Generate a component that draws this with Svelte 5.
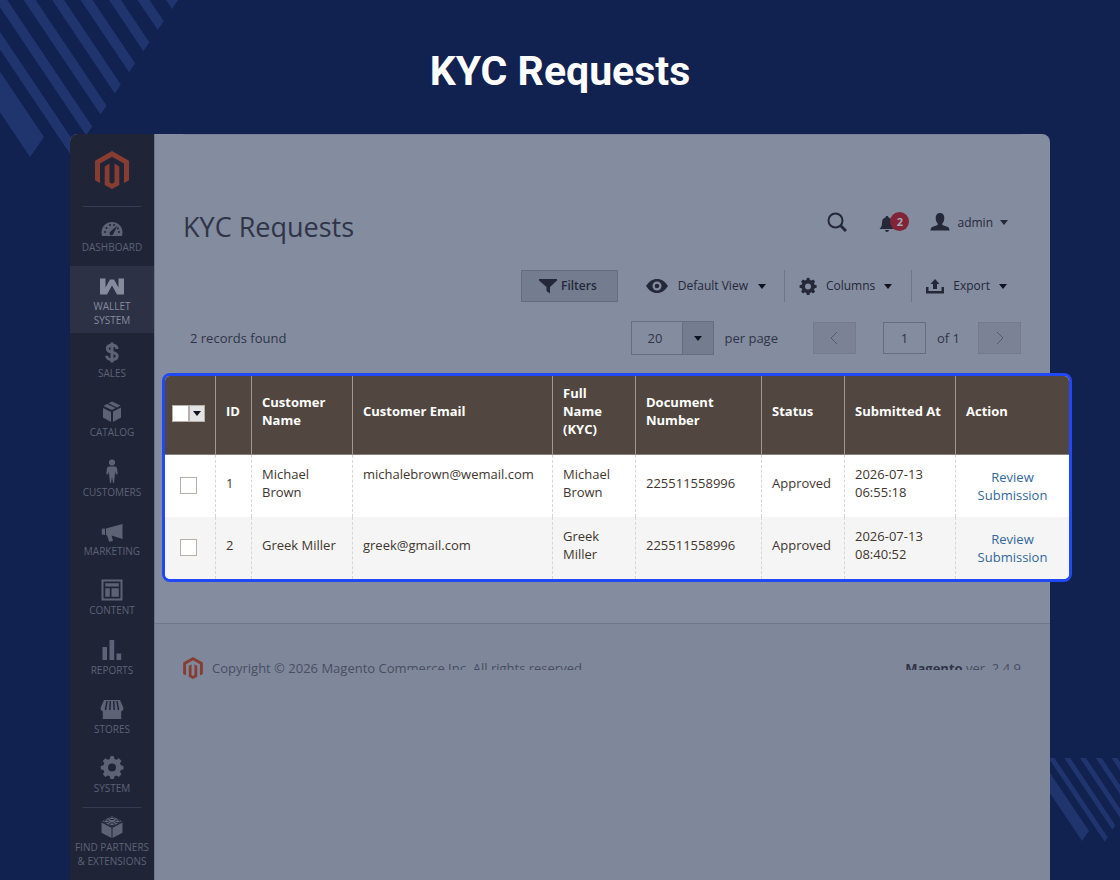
<script lang="ts">
  type Column = { label: string; width: number }

  const columns: Column[] = [
    { label: 'ID', width: 36 },
    { label: 'Customer Name', width: 101 },
    { label: 'Customer Email', width: 200 },
    { label: 'Full Name (KYC)', width: 83 },
    { label: 'Document Number', width: 126 },
    { label: 'Status', width: 83 },
    { label: 'Submitted At', width: 111 },
    { label: 'Action', width: 113 },
  ]

  let rows = $state([
    { id: 1, name: 'Michael Brown', email: 'michalebrown@wemail.com', doc: '225511558996', status: 'Approved', at: '2026-07-13 06:55:18', picked: false },
    { id: 2, name: 'Greek Miller', email: 'greek@gmail.com', doc: '225511558996', status: 'Approved', at: '2026-07-13 08:40:52', picked: false },
  ])

  const menu = [
    { icon: 'dashboard', label: 'Dashboard' },
    { icon: 'wallet', label: 'Wallet System', active: true },
    { icon: 'sales', label: 'Sales' },
    { icon: 'catalog', label: 'Catalog' },
    { icon: 'customers', label: 'Customers' },
    { icon: 'marketing', label: 'Marketing' },
    { icon: 'content', label: 'Content' },
    { icon: 'reports', label: 'Reports' },
    { icon: 'stores', label: 'Stores' },
    { icon: 'system', label: 'System' },
    { icon: 'partners', label: 'Find Partners & Extensions', divided: true },
  ]

  let pageSize = $state(20)
  let page = $state(1)

  function pickAll(e: Event) {
    const on = (e.currentTarget as HTMLInputElement).checked
    rows.forEach((r) => (r.picked = on))
  }

  // A diagonal bar: (x, y) is its right tip, (w, h) the step to its bottom tip.
  function bar(x: number, y: number, w: number, h: number) {
    return `${x},${y} ${x - w},${y + h} ${x - w - 200},${y + h - 298} ${x - 200},${y - 298}`
  }
</script>

{#snippet gear()}
  <path d="M12 1l1.900.3.6 2.700 2 .8 2.400-1.500 2.600 2.600-1.500 2.400.8 2 2.700.6v3.400l-2.700.6-.8 2 1.500 2.400-2.600 2.600-2.400-1.500-2 .8-.6 2.700h-3.500l-.6-2.700-2-.8-2.400 1.500-2.600-2.600 1.500-2.400-.8-2-2.700-.6v-3.400l2.700-.6.8-2-1.500-2.400 2.600-2.600 2.400 1.500 2-.8.6-2.700zM12 8.500a4 4 0 1 0 0 8 4 4 0 0 0 0-8z" fill-rule="evenodd" />
{/snippet}

{#snippet caret()}
  <svg class="caret" viewBox="0 0 8 5" aria-hidden="true"><path d="M0 0h8L4 5z" /></svg>
{/snippet}

{#snippet magento()}
  <svg class="magento" viewBox="0 0 34 38" aria-hidden="true">
    <path d="M17 0l17 9.700v19.500l-5 2.900V12.600L17 5.700 5 12.600v19.500l-5-2.900V9.700z" />
    <path d="M9.700 15.400l4.800-2.800v18.600l2.500 1.500 2.500-1.500V12.600l4.800 2.800V34L17 38l-7.300-4z" />
  </svg>
{/snippet}

<div class="page">
  <svg class="stripes top" viewBox="0 0 180 160" aria-hidden="true">
    {#each [0, 1, 2, 3, 4, 5, 6, 7] as i}
      <polygon points={bar(178 - 14.3 * i, 21.1 * i, 6, 9)} />
    {/each}
    <polygon points={bar(44, 137, 14, 20)} />
  </svg>
  <svg class="stripes bottom" viewBox="0 0 70 84" aria-hidden="true">
    {#each [0, 1, 2, 3, 4] as i}
      <polygon points={bar(57.7 + 7.7 * i, 79.300 - 12 * i, 3, 4.500)} />
    {/each}
    <polygon points={bar(39, 73, 7, 10)} />
  </svg>

  <h1>KYC Requests</h1>

  <div class="panel">
    <nav>
      <a class="brand" href="#home" aria-label="Home">{@render magento()}</a>
      {#each menu as item}
        {#if item.divided}<hr />{/if}
        <a class="item" class:active={item.active} href="#{item.icon}">
          <svg viewBox="0 0 24 24" aria-hidden="true">
            {#if item.icon === 'dashboard'}
              <path d="M12 8C6 8 1.500 12.500 1.500 18.500c0 1.500.2 2.500.6 3.500h19.800c.4-1 .6-2 .6-3.500C22.500 12.500 18 8 12 8z" />
              <g class="ink">
                <path d="M17.500 11.500l-4 8a2 2 0 1 1-3-2z" />
                <circle cx="5" cy="18" r="1" /><circle cx="6.500" cy="14" r="1" /><circle cx="10" cy="11" r="1" />
                <circle cx="14" cy="11" r="1" /><circle cx="19" cy="18" r="1" /><circle cx="18" cy="14.500" r="1" />
              </g>
            {:else if item.icon === 'wallet'}
              <path d="M0 5.500h5.500v9l4.500-8h4l4.500 8v-9H24v16h-7l-5-9-5 9H0z" />
            {:else if item.icon === 'sales'}
              <path class="line" d="M17 9c0-2.500-2-3.700-5-3.700S7.300 6.600 7.300 8.700c0 5 9.900 2.300 9.900 7.100 0 2.500-2.200 3.900-5.200 3.900s-5.300-1.500-5.300-4M12 2.500v20" />
            {:else if item.icon === 'catalog'}
              <path d="M13 12.500l8-4v10l-8 4.500zM3 9l8 4v10l-8-4.500zM3.500 7l3.500-2 8.500 4-3.500 2zM8.500 4.200L12 2.500 20.500 6.500l-3.500 2z" />
            {:else if item.icon === 'customers'}
              <circle cx="12" cy="3.500" r="3.100" />
              <path d="M9 7.500h6c1.500 0 2 1 2.200 2.500l.5 5-1.700.5-.8-3-1.200 11.500h-1l-1-6-1 6h-1L8.800 12.500l-.8 3-1.700-.5.5-5C7 8.500 7.500 7.500 9 7.500z" />
            {:else if item.icon === 'marketing'}
              <path d="M22.500 6v15l-11-3.500 1.500 5.500-3.800.8L7 17.300 6 17v-6.500zM1.800 10.800L5 10.500v6.500l-3.200-.5z" />
            {:else if item.icon === 'content'}
              <path d="M1.500 2.500h21v21h-21zM3.500 4.500v17h17v-17zM5.300 6.300h13.500v3.300H5.300zM5.300 11.300h4.500v8.500H5.300zM11.500 11.300h7.300v8.500h-7.300z" fill-rule="evenodd" />
            {:else if item.icon === 'reports'}
              <path d="M2.500 10h4.500v13H2.500zM9.500 3h4.700v20H9.500zM16.500 16.500h4.700V23h-4.700z" />
            {:else if item.icon === 'stores'}
              <path d="M4 4h16l3.500 8c0 2-1 3-2.300 3.200V23H2.800v-7.800C1.500 15 .5 14 .5 12z" />
              <path class="ink gap" d="M7 5l-1.500 9M10.300 5l-.5 9M13.700 5l.5 9M17 5l1.500 9" />
            {:else if item.icon === 'system'}
              {@render gear()}
            {:else}
              <path d="M1.500 8.500l10 5.200V24l-10-5.200zM22.500 8.500l-10 5.200V24l10-5.200zM12 2l10 5.300-10 5.200L2 7.300z" />
              <g class="ink ring">
                <ellipse cx="12" cy="4.300" rx="2.500" ry="1.300" /><ellipse cx="6.500" cy="7.300" rx="2.500" ry="1.300" />
                <ellipse cx="17.500" cy="7.300" rx="2.500" ry="1.300" /><ellipse cx="12" cy="10.200" rx="2.500" ry="1.300" />
              </g>
            {/if}
          </svg>
          <span>{item.label}</span>
        </a>
      {/each}
    </nav>

    <main>
      <header>
        <h2>KYC Requests</h2>
        <div class="account">
          <button aria-label="Search">
            <svg class="i20" viewBox="0 0 20 20" aria-hidden="true">
              <circle class="line" cx="8.500" cy="8.500" r="7" /><path class="line thick" d="M13.500 13.500l5.500 5.500" />
            </svg>
          </button>
          <button class="bell" aria-label="Notifications">
            <svg class="i16" viewBox="0 0 16 16" aria-hidden="true">
              <path d="M8 0c1 0 1.500.6 1.500 1.500C12 2.200 13 4 13 6.500c0 3.500.8 5 2.500 6.500H.5C2.200 11.500 3 10 3 6.500 3 4 4 2.200 6.500 1.500 6.500.6 7 0 8 0zM6 14h4c-.2 1.300-1 2-2 2s-1.800-.7-2-2z" />
            </svg>
            <span class="badge">2</span>
          </button>
          <button>
            <svg class="i20" viewBox="0 0 20 20" aria-hidden="true">
              <path d="M10 1c3 0 4.300 2 4.300 5 0 2.500-.8 4.500-2 5.500v1.600l5.500 2c1.200.5 1.500 1.500 1.700 3.400H.5c.2-1.900.5-2.900 1.700-3.400l5.500-2v-1.600c-1.200-1-2-3-2-5.500 0-3 1.300-5 4.300-5z" />
            </svg>
            admin {@render caret()}
          </button>
        </div>
      </header>

      <div class="tools">
        <button class="filters">
          <svg class="i18" viewBox="0 0 18 18" aria-hidden="true"><path d="M0 2h18v1.500L11 10v6.500L7.500 14v-4L0 3.500z" /></svg>
          Filters
        </button>
        <button class="view">
          <svg class="eye" viewBox="0 0 22 14" aria-hidden="true">
            <path d="M0 7c3-4.500 6.500-7 11-7s8 2.500 11 7c-3 4.500-6.500 7-11 7S3 11.500 0 7zM11 2.500a4.500 4.500 0 1 0 0 9 4.500 4.500 0 0 0 0-9z" fill-rule="evenodd" />
            <circle cx="11" cy="7" r="2.300" />
          </svg>
          Default View {@render caret()}
        </button>
        <button class="tool">
          <svg class="i18" viewBox="0 0 24 24" aria-hidden="true">{@render gear()}</svg>
          Columns {@render caret()}
        </button>
        <button class="tool">
          <svg class="i18" viewBox="0 0 18 18" aria-hidden="true">
            <path d="M9 2l4.500 5H11v5H7V7H4.500zM0 10h2.500v4h13v-4H18v6.500H0z" />
          </svg>
          Export {@render caret()}
        </button>
      </div>

      <div class="paging">
        <p>2 records found</p>
        <label class="size">
          <span class="combo">
            <select bind:value={pageSize}>
              <option value={20}>20</option>
              <option value={30}>30</option>
              <option value={50}>50</option>
            </select>
            <span class="arrow">{@render caret()}</span>
          </span>
          per page
        </label>
        <button class="step" aria-label="Previous page" disabled>
          <svg viewBox="0 0 8 14" aria-hidden="true"><path class="line" d="M7 1L1 7l6 6" /></svg>
        </button>
        <label class="current"><input type="text" aria-label="Page" bind:value={page} /> of 1</label>
        <button class="step" aria-label="Next page" disabled>
          <svg viewBox="0 0 8 14" aria-hidden="true"><path class="line" d="M1 1l6 6-6 6" /></svg>
        </button>
      </div>

      <div class="grid">
        <table>
          <colgroup>
            <col style:width="51px" />
            {#each columns as col}<col style:width="{col.width}px" />{/each}
          </colgroup>
          <thead>
            <tr>
              <th class="pick">
                <span class="multi">
                  <input type="checkbox" aria-label="Select all" onchange={pickAll} />
                  <button aria-label="Selection options">{@render caret()}</button>
                </span>
              </th>
              {#each columns as col}<th>{col.label}</th>{/each}
            </tr>
          </thead>
          <tbody>
            {#each rows as row}
              <tr>
                <td class="pick"><input type="checkbox" aria-label="Select request {row.id}" bind:checked={row.picked} /></td>
                <td>{row.id}</td>
                <td>{row.name}</td>
                <td class:high={row.email.length > 20}>{row.email}</td>
                <td class="full">{row.name}</td>
                <td>{row.doc}</td>
                <td>{row.status}</td>
                <td>{row.at}</td>
                <td class="action"><a href="#review-{row.id}">Review Submission</a></td>
              </tr>
            {/each}
          </tbody>
        </table>
      </div>

      <footer>
        {@render magento()}
        <p>Copyright © 2026 Magento Com<span class="cut">merce Inc. All rights reserved.</span></p>
        <p class="version cut"><strong>Magento</strong> ver. 2.4.9</p>
      </footer>
    </main>
  </div>
</div>

<style>
  :global(body) {
    margin: 0;
    background: #112150;
  }
  .page {
    position: relative;
    min-height: 100vh;
    display: flex;
    flex-direction: column;
    overflow: hidden;
    background: #112150;
    color: #303448;
    font-family: 'Open Sans', 'Noto Sans', sans-serif;
    font-size: 13px;
  }
  .stripes {
    position: absolute;
    fill: #20356e;
  }
  .top {
    top: 0;
    left: 0;
    width: 180px;
  }
  .bottom {
    right: 0;
    bottom: 38px;
    width: 70px;
  }
  h1 {
    margin: 0;
    padding: 47px 0 39px;
    color: #fff;
    font: 700 41px/48px Roboto, sans-serif;
    text-align: center;
  }
  svg {
    display: block;
    flex: none;
    fill: currentColor;
  }
  .line {
    fill: none;
    stroke: currentColor;
    stroke-width: 2;
  }
  .thick {
    stroke-width: 3;
  }
  .caret {
    width: 8px;
    height: 5px;
  }
  .i16 { width: 16px; height: 16px; }
  .i18 { width: 18px; height: 18px; }
  .i20 { width: 20px; height: 20px; }
  .magento {
    fill: #873d31;
  }
  button {
    display: flex;
    align-items: center;
    padding: 0;
    border: 0;
    background: none;
    color: #252839;
    font: inherit;
    cursor: pointer;
  }

  .panel {
    position: relative;
    flex: 1;
    display: flex;
    margin: 0 70px;
    border-radius: 8px 8px 0 0;
    background: #848c9f;
  }
  nav {
    flex: 0 0 84px;
    border-radius: 8px 0 0 0;
    background: #202437;
    padding-bottom: 8px;
  }
  .brand {
    display: block;
    margin: 0 13px;
    padding: 17px 12px;
    border-bottom: 1px solid #373c50;
  }
  .brand .magento {
    width: 34px;
    height: 38px;
  }
  .item {
    height: 59px;
    padding: 0 4px 12px;
    box-sizing: border-box;
    display: flex;
    flex-direction: column;
    align-items: center;
    justify-content: flex-end;
    gap: 2px;
    color: #5d6275;
    font-size: 10px;
    line-height: 14px;
    text-align: center;
    text-transform: uppercase;
    text-decoration: none;
  }
  .item:nth-of-type(3n) {
    height: 60px;
  }
  .item svg {
    width: 24px;
    height: 24px;
  }
  .item .line {
    stroke-width: 3;
  }
  .ink {
    fill: #202437;
  }
  .gap {
    stroke: #202437;
    stroke-width: 1.5;
  }
  .ring {
    fill: #6b7083;
    stroke: #202437;
  }
  .item.active {
    height: auto;
    padding: 7px 16px 6px;
    background: #2c3145;
    color: #858b9d;
  }
  hr {
    height: 1px;
    margin: 0 13px;
    border: 0;
    background: #373c50;
  }
  hr + .item {
    padding-bottom: 0;
  }

  main {
    flex: 1;
    min-width: 0;
    display: flex;
    flex-direction: column;
    border-left: 1px solid #6d7588;
  }
  header {
    margin: 0 29px 0 28px;
    padding-top: 68px;
    display: flex;
    justify-content: space-between;
    border-top: 1px solid #7b8396;
  }
  h2 {
    margin: 0;
    font-size: 27px;
    font-weight: 400;
    line-height: 48px;
  }
  .account {
    display: flex;
    align-items: center;
    gap: 32px;
    height: 38px;
    padding-right: 13px;
    font-size: 12px;
  }
  .account button {
    gap: 7px;
  }
  .account .bell {
    position: relative;
    padding: 4px 3px 0 0;
  }
  .badge {
    position: absolute;
    top: 0;
    left: 11px;
    width: 19px;
    border-radius: 10px;
    background: #812437;
    color: #a3a9b8;
    font-size: 11px;
    font-weight: 700;
    line-height: 19px;
    text-align: center;
  }
  .tools {
    display: flex;
    justify-content: flex-end;
    margin: 19px 29px 0 28px;
    padding-right: 14px;
    font-size: 12px;
    line-height: 32px;
  }
  .tools .caret,
  .arrow,
  .multi .caret {
    color: #10121f;
  }
  .filters {
    gap: 4px;
    padding: 0 21px 0 18px;
    box-shadow: inset 0 0 0 1px #666d81;
    background: #747c90;
    font-weight: 600;
  }
  .view {
    gap: 10px;
    padding: 0 18px 0 28px;
  }
  .tool {
    gap: 9px;
    padding-left: 14px;
    border-left: 1px solid #6d7588;
  }
  .tool + .tool {
    margin-left: 19px;
  }
  .eye {
    width: 22px;
    height: 14px;
  }

  .paging {
    display: flex;
    align-items: center;
    margin: 19px 29px 18px 28px;
    line-height: 18px;
  }
  p {
    margin: 0;
  }
  .paging p {
    flex: 1;
    padding-left: 7px;
  }
  .size,
  .current {
    display: flex;
    align-items: center;
    gap: 11px;
  }
  .combo {
    display: grid;
    width: 83px;
  }
  .combo > * {
    grid-area: 1 / 1;
  }
  select,
  input {
    appearance: none;
    box-sizing: border-box;
    margin: 0;
    border: 1px solid #666d81;
    border-radius: 0;
    background: none;
    color: inherit;
    font: inherit;
  }
  select {
    height: 34px;
    padding: 0 48px 0 16px;
  }
  .arrow {
    justify-self: end;
    display: grid;
    place-items: center;
    width: 32px;
    border: 1px solid #666d81;
    background: #747c90;
    box-sizing: border-box;
    pointer-events: none;
  }
  .step {
    justify-content: center;
    width: 43px;
    height: 32px;
    border: 1px solid #747b8f;
    background: #7c8296;
    color: #555b6f;
  }
  .step svg {
    width: 8px;
    height: 14px;
    overflow: visible;
  }
  .step .line {
    stroke-width: 1;
  }
  .size {
    margin-right: 35px;
  }
  .current {
    margin: 0 18px 0 27px;
  }
  .current input {
    width: 43px;
    height: 32px;
    text-align: center;
  }

  .grid {
    margin: 0 -22px 0 7px;
    border: 3px solid #2148f5;
    border-radius: 8px;
    background: #fff;
    overflow: hidden;
  }
  table {
    width: 100%;
    table-layout: fixed;
    border-collapse: separate;
    border-spacing: 0;
    color: #41362f;
    line-height: 18px;
  }
  th {
    height: 79px;
    box-sizing: border-box;
    padding: 8px 10px 16px;
    border-right: 1px solid #a09893;
    border-bottom: 1px solid #8a817b;
    background: #514740;
    color: #fff;
    font-weight: 700;
    text-align: left;
  }
  td {
    height: 62px;
    box-sizing: border-box;
    padding: 10px 10px 16px;
    border-right: 1px dashed #d6d6d6;
  }
  th:last-child,
  td:last-child {
    border-right: 0;
  }
  tbody tr:nth-child(even) {
    background: #f5f5f5;
  }
  .high {
    vertical-align: top;
  }
  .full {
    padding-right: 20px;
  }
  .action {
    padding: 13px 10px;
    text-align: center;
  }
  .action a {
    color: #33689a;
    text-decoration: none;
  }
  .pick {
    padding: 0 4px 2px 0;
    text-align: center;
  }
  th.pick {
    padding-bottom: 5px;
  }
  .pick input {
    display: block;
    width: 17px;
    height: 17px;
    margin: 0 auto;
    border-color: #b5b0ac;
    background: #fff;
  }
  .pick input:checked {
    background: #514740;
  }
  .multi {
    display: inline-flex;
    vertical-align: middle;
  }
  .multi button {
    justify-content: center;
    width: 16px;
    background: #e3e3e3;
    border: 1px solid #b5b0ac;
  }

  footer {
    flex: 1;
    display: flex;
    align-items: flex-start;
    gap: 9px;
    margin-top: 41px;
    padding: 33px 29px 0 28px;
    border-top: 1px solid #6f768a;
    background: #7f879a;
    color: #484e62;
    line-height: 22px;
  }
  footer .magento {
    width: 20px;
    height: 22px;
  }
  .cut {
    display: inline-block;
    clip-path: inset(0 0 9px 0);
  }
  .version {
    margin-left: auto;
  }
  strong {
    color: #303448;
  }
</style>
